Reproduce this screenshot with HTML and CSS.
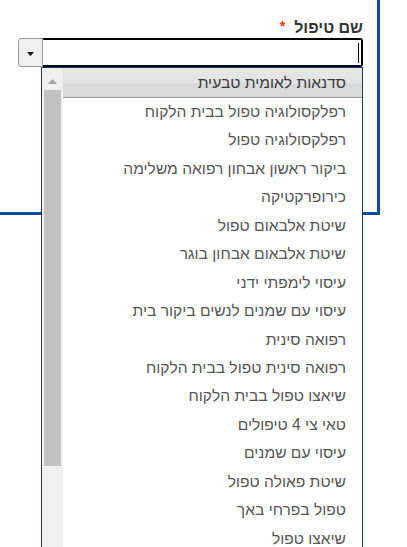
FILE: index.html
```html
<!DOCTYPE html>
<html lang="he">
<head>
<meta charset="utf-8">
<title>שם טיפול</title>
<link rel="stylesheet" href="styles.css">
</head>
<body>
<div class="panel">
  <div class="field" dir="rtl">
    <label class="label">שם טיפול<span class="req">*</span></label>
    <div class="combo">
      <div class="input"><span class="caret"></span></div>
      <button class="toggle" type="button" aria-label="פתח">
        <svg width="7" height="4" viewBox="0 0 7 4"><polygon points="0,0 7,0 3.5,4" fill="#111"/></svg>
      </button>
    </div>
  </div>
</div>
<div class="menu">
  <div class="track">
    <div class="arrow"><svg width="9" height="5" viewBox="0 0 9 5"><polygon points="0,5 9,5 4.5,0" fill="#a3a3a3"/></svg></div>
    <div class="thumb"></div>
  </div>
  <ul class="items" dir="rtl">
    <li class="item active">סדנאות לאומית טבעית</li>
    <li class="item">רפלקסולוגיה טפול בבית הלקוח</li>
    <li class="item">רפלקסולוגיה טפול</li>
    <li class="item">ביקור ראשון אבחון רפואה משלימה</li>
    <li class="item">כירופרקטיקה</li>
    <li class="item">שיטת אלבאום טפול</li>
    <li class="item">שיטת אלבאום אבחון בוגר</li>
    <li class="item">עיסוי לימפתי ידני</li>
    <li class="item">עיסוי עם שמנים לנשים ביקור בית</li>
    <li class="item">רפואה סינית</li>
    <li class="item">רפואה סינית טפול בבית הלקוח</li>
    <li class="item">שיאצו טפול בבית הלקוח</li>
    <li class="item">טאי צי 4 טיפולים</li>
    <li class="item">עיסוי עם שמנים</li>
    <li class="item">שיטת פאולה טפול</li>
    <li class="item">טפול בפרחי באך</li>
    <li class="item">שיאצו טפול</li>
  </ul>
</div>
</body>
</html>
```
FILE: styles.css
```css
html, body {
  margin: 0;
  padding: 0;
  background: #fff;
  font-family: "Liberation Sans", Arial, sans-serif;
}

.panel {
  width: 363px;
  height: 212px;
  padding: 0 14px 0 0;
  border-right: 3px solid #0a4f9e;
  border-bottom: 3px solid #0a4f9e;
}

.field {
  padding: 16px 0 0 18px;
}

.label {
  display: block;
  font-size: 16px;
  font-weight: bold;
  color: #333;
  line-height: 20px;
  height: 22px;
}

.req {
  color: #e32;
  font-size: 14px;
  font-weight: bold;
  margin-right: 9px;
  vertical-align: 2px;
}

.combo {
  display: flex;
  height: 29px;
}

.input {
  flex: 1;
  box-sizing: border-box;
  height: 29px;
  border: 2px solid #000;
  border-left: 0;
  border-radius: 0 3px 3px 0;
  background: #fff;
  padding: 0 2px 0 0;
  display: flex;
  align-items: center;
}

.caret {
  width: 1px;
  height: 20px;
  background: #000;
}

.toggle {
  box-sizing: border-box;
  width: 25px;
  height: 29px;
  margin: 0;
  padding: 0;
  border: 1px solid #999;
  border-radius: 3px 0 0 3px;
  background: #efefef;
  display: flex;
  align-items: center;
  justify-content: center;
}

.toggle svg {
  display: block;
  margin-top: 2px;
}

.menu {
  position: absolute;
  top: 67px;
  left: 41px;
  width: 320px;
  height: 500px;
  border: 1px solid #1b3a6b;
  background: #fff;
  display: flex;
  overflow: hidden;
  z-index: 2;
}

.track {
  width: 21px;
  background: #f0f0f0;
  flex: none;
}

.arrow {
  height: 22px;
  display: flex;
  align-items: flex-end;
  justify-content: center;
  box-sizing: border-box;
  padding-bottom: 6px;
}

.arrow svg {
  display: block;
}

.thumb {
  margin: 0 2px;
  height: 376px;
  background: #c1c1c1;
}

.items {
  flex: 1;
  margin: 0;
  padding: 0;
  list-style: none;
}

.item {
  height: 28.45px;
  line-height: 28.45px;
  padding-right: 16px;
  font-size: 15.6px;
  color: #555;
  white-space: nowrap;
}

.item.active {
  height: 29px;
  line-height: 29px;
  border-bottom: 1px solid #9a9a9a;
  background: linear-gradient(#e6e6e6 0%, #e3e3e3 50%, #dadada 50%, #dadada 100%);
  color: #3a3a3a;
}
```
